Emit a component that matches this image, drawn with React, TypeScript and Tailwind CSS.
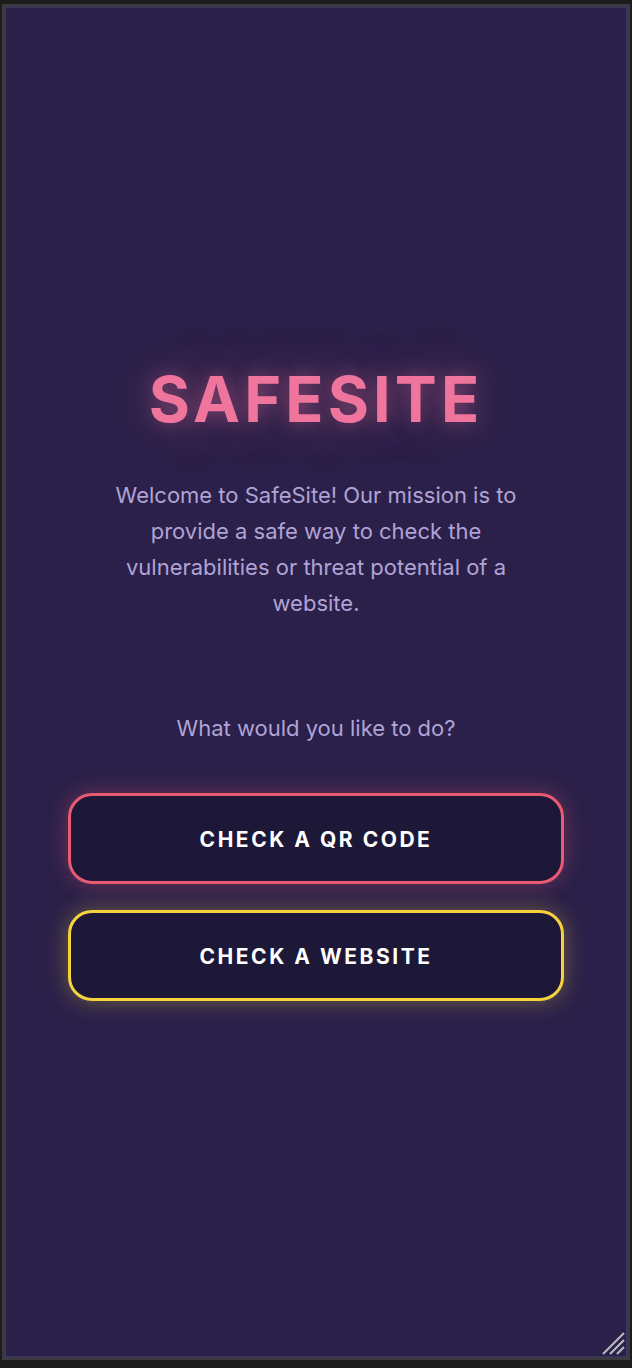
import React from "react";

export default function App() {
  return (
    <div className="w-[632px] h-[1368px] bg-[#1c1c1c] pt-[4px] pl-[2px] pr-[2px] pb-[8px] flex" style={{ fontFamily: "Inter, 'Noto Sans', sans-serif" }}>
      <div className="flex-1 border-[3px] border-[#3b3a40] flex">
        <div className="relative flex-1 bg-[#2a2049] border border-[#3e3468] flex flex-col items-center justify-start pt-[351px]">
          <div className="flex flex-col items-center w-full">
            <h1
              className="text-[63px] leading-[80px] font-bold tracking-[0.065em] text-[#f0759d]"
              style={{ textShadow: "0 0 20px rgba(240,117,157,0.45), 0 0 60px rgba(240,117,157,0.3)" }}
            >
              SAFESITE
            </h1>
            <p className="mt-[38px] w-[440px] text-center text-[22px] leading-[36px] text-[#b0a3d6]">
              Welcome to SafeSite! Our mission is to provide a safe way to check the vulnerabilities or threat potential of a website.
            </p>
            <p className="mt-[89px] text-[22px] leading-[36px] text-[#b0a3d6]">What would you like to do?</p>
            <div className="mt-[47px] flex flex-col gap-[26px] w-[496px]">
              <button
                className="h-[91px] rounded-[24px] border-[3px] border-[#e85a72] bg-[#1d1838] text-white text-[21px] font-bold tracking-[0.12em] pt-[2px]"
                style={{ boxShadow: "0 0 22px rgba(232,90,114,0.35)" }}
              >
                CHECK A QR CODE
              </button>
              <button
                className="h-[91px] rounded-[24px] border-[3px] border-[#f6d33c] bg-[#1d1838] text-white text-[21px] font-bold tracking-[0.12em] pt-[2px]"
                style={{ boxShadow: "0 0 22px rgba(246,211,60,0.35)" }}
              >
                CHECK A WEBSITE
              </button>
            </div>
          </div>
          <svg className="absolute right-[1px] bottom-[1px]" width="24" height="24" viewBox="0 0 24 24">
            <g stroke="#b9b9bd" strokeWidth="2.2" strokeLinecap="butt">
              <line x1="2" y1="23" x2="23" y2="2" />
              <line x1="9" y1="23" x2="23" y2="9" />
              <line x1="16" y1="23" x2="23" y2="16" />
            </g>
          </svg>
        </div>
      </div>
    </div>
  );
}
